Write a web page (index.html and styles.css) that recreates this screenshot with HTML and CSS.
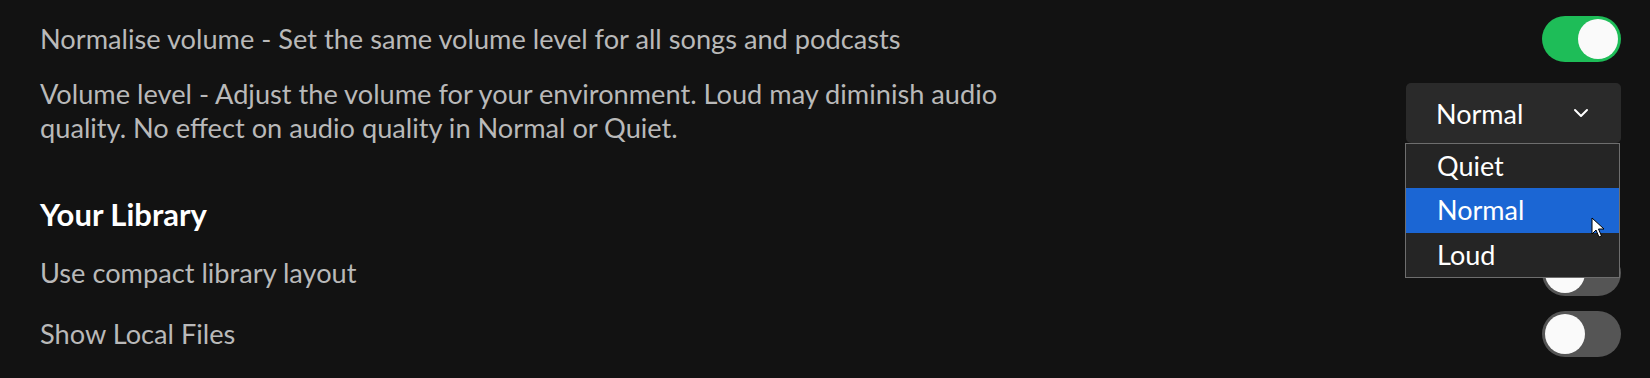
FILE: index.html
```html
<!DOCTYPE html>
<html>
<head>
<meta charset="utf-8">
<link rel="stylesheet" href="styles.css">
</head>
<body>
<div class="page">
  <div class="row row-first">
    <span class="label">Normalise volume - Set the same volume level for all songs and podcasts</span>
    <span class="toggle on"><span class="knob"></span></span>
  </div>
  <div class="row row-top">
    <span class="label wrap">Volume level - Adjust the volume for your environment. Loud may diminish audio quality. No effect on audio quality in Normal or Quiet.</span>
    <div class="select-wrap">
      <div class="select">
        <span>Normal</span>
        <svg class="chev" width="16" height="10" viewBox="0 0 16 10"><path d="M2 2 L8 8 L14 2" fill="none" stroke="#fff" stroke-width="2" stroke-linecap="round" stroke-linejoin="round"/></svg>
      </div>
      <ul class="menu">
        <li>Quiet</li>
        <li class="sel">Normal</li>
        <li>Loud</li>
      </ul>
      <svg class="cursor" width="14" height="22" viewBox="0 0 14 22"><path d="M1 1 L1 17 L5 13 L8 20 L10.5 19 L7.5 12 L13 12 Z" fill="#fff" stroke="#000" stroke-width="1"/></svg>
    </div>
  </div>
  <h2 class="heading">Your Library</h2>
  <div class="row">
    <span class="label">Use compact library layout</span>
    <span class="toggle"><span class="knob"></span></span>
  </div>
  <div class="row row-gap">
    <span class="label">Show Local Files</span>
    <span class="toggle"><span class="knob"></span></span>
  </div>
</div>
</body>
</html>
```

FILE: styles.css
```css
html, body {
  margin: 0;
  padding: 0;
  background: #121212;
  width: 1650px;
  height: 378px;
  overflow: hidden;
}
.page {
  padding: 16px 29px 0 40px;
  font-family: Lato, "Noto Sans", sans-serif;
  color: #b9b9b9;
}
.row {
  display: flex;
  justify-content: space-between;
  align-items: center;
  height: 46px;
}
.row-top {
  align-items: flex-start;
  height: auto;
  margin-top: 15px;
}
.row-gap {
  margin-top: 15px;
}
.label {
  font-size: 27.2px;
  line-height: 34px;
}
.wrap {
  width: 965px;
}
.toggle {
  width: 79px;
  height: 46px;
  border-radius: 23px;
  background: #555555;
  display: flex;
  align-items: center;
  padding: 0 3px;
  box-sizing: border-box;
  flex-shrink: 0;
}
.toggle.on {
  background: #1ebd58;
  justify-content: flex-end;
}
.knob {
  width: 40px;
  height: 40px;
  border-radius: 50%;
  background: #fafafa;
}
.select-wrap {
  position: relative;
  margin-top: 6px;
  width: 215px;
}
.select {
  height: 60px;
  background: #2a2a2a;
  border-radius: 5px;
  display: flex;
  align-items: center;
  justify-content: space-between;
  padding: 0 32px 0 30px;
  color: #ffffff;
  font-size: 27px;
}
.chev {
  display: block;
}
.menu {
  position: absolute;
  top: 60px;
  left: -1px;
  width: 215px;
  margin: 0;
  padding: 0;
  list-style: none;
  background: #252525;
  border: 1px solid #6e6e6e;
  box-sizing: border-box;
  z-index: 2;
}
.menu li {
  height: 44.3px;
  line-height: 44px;
  padding-left: 31px;
  color: #ffffff;
  font-size: 27px;
}
.menu li.sel {
  background: #1b66d4;
}
.cursor {
  position: absolute;
  left: 185px;
  top: 134px;
  z-index: 3;
}
.heading {
  margin: 52px 0 19px 0;
  font-size: 31px;
  line-height: 34px;
  font-weight: 700;
  color: #ffffff;
}
```
